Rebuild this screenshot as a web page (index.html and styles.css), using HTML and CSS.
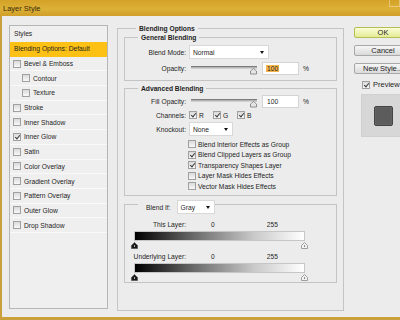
FILE: index.html
```html
<!DOCTYPE html>
<html lang="en">
<head>
    <meta charset="UTF-8">
    <title>Layer Style</title>
    <link rel="stylesheet" href="styles.css">
</head>
<body>
    <div class="window">
        <!-- title bar -->
        <div class="titlebar">
            <span class="title">Layer Style</span>
            <span class="close"></span>
        </div>

        <div class="body">
            <!-- styles list -->
            <div class="styles-panel">
                <div class="styles-head">Styles</div>
                <div class="style-row active">Blending Options: Default</div>
                <div class="style-row"><span class="cb"></span>Bevel &amp; Emboss</div>
                <div class="style-row sub"><span class="cb"></span>Contour</div>
                <div class="style-row sub"><span class="cb"></span>Texture</div>
                <div class="style-row"><span class="cb"></span>Stroke</div>
                <div class="style-row"><span class="cb"></span>Inner Shadow</div>
                <div class="style-row"><span class="cb on"></span>Inner Glow</div>
                <div class="style-row"><span class="cb"></span>Satin</div>
                <div class="style-row"><span class="cb"></span>Color Overlay</div>
                <div class="style-row"><span class="cb"></span>Gradient Overlay</div>
                <div class="style-row"><span class="cb"></span>Pattern Overlay</div>
                <div class="style-row"><span class="cb"></span>Outer Glow</div>
                <div class="style-row"><span class="cb"></span>Drop Shadow</div>
            </div>

            <!-- blending options -->
            <div class="options">
                <div class="group outer">
                    <div class="legend">Blending Options</div>

                    <div class="group general">
                        <div class="legend">General Blending</div>
                        <div class="field mode-row">
                            <span class="label">Blend Mode:</span>
                            <span class="select mode">Normal<i class="arrow"></i></span>
                        </div>
                        <div class="field slider-row">
                            <span class="label">Opacity:</span>
                            <svg class="slider" width="70" height="13" viewBox="0 0 70 13">
                                <rect x="2" y="4" width="66" height="1" fill="#7c7c7c"/>
                                <rect x="2" y="5" width="66" height="1.5" fill="#b4b4b4"/>
                                <path d="M64.5 6.5 L67.5 9 L67.5 12 L61.5 12 L61.5 9 Z" fill="#e6e6e6" stroke="#7a7a7a" stroke-width="0.8"/>
                            </svg>
                            <span class="num-input"><span class="selected">100</span></span>
                            <span class="pct">%</span>
                        </div>
                    </div>

                    <div class="group advanced">
                        <div class="legend">Advanced Blending</div>
                        <div class="field fill-row">
                            <span class="label">Fill Opacity:</span>
                            <svg class="slider" width="70" height="13" viewBox="0 0 70 13">
                                <rect x="2" y="4" width="66" height="1" fill="#7c7c7c"/>
                                <rect x="2" y="5" width="66" height="1.5" fill="#b4b4b4"/>
                                <path d="M64.5 6.5 L67.5 9 L67.5 12 L61.5 12 L61.5 9 Z" fill="#e6e6e6" stroke="#7a7a7a" stroke-width="0.8"/>
                            </svg>
                            <span class="num-input">100</span>
                            <span class="pct">%</span>
                        </div>
                        <div class="field channels-row">
                            <span class="label">Channels:</span>
                            <span class="channel"><span class="cb on"></span>R</span>
                            <span class="channel"><span class="cb on"></span>G</span>
                            <span class="channel"><span class="cb on"></span>B</span>
                        </div>
                        <div class="field knockout-row">
                            <span class="label">Knockout:</span>
                            <span class="select knockout">None<i class="arrow"></i></span>
                        </div>
                        <div class="checklist">
                            <div class="check-row"><span class="cb"></span>Blend Interior Effects as Group</div>
                            <div class="check-row"><span class="cb on"></span>Blend Clipped Layers as Group</div>
                            <div class="check-row"><span class="cb on"></span>Transparency Shapes Layer</div>
                            <div class="check-row"><span class="cb"></span>Layer Mask Hides Effects</div>
                            <div class="check-row"><span class="cb"></span>Vector Mask Hides Effects</div>
                        </div>
                    </div>

                    <div class="group blendif">
                        <div class="legend">
                            <span>Blend If:</span>
                            <span class="select gray">Gray<i class="arrow"></i></span>
                        </div>
                        <div class="field level-row">
                            <span class="label">This Layer:</span>
                            <span class="lo">0</span>
                            <span class="hi">255</span>
                        </div>
                        <div class="ramp"></div>
                        <div class="handles">
                            <svg width="7" height="7" viewBox="0 0 7 7"><path d="M3.5 0.5 L6.5 3.5 L6.5 6.5 L0.5 6.5 L0.5 3.5 Z" fill="#1a1a1a" stroke="#555" stroke-width="0.8"/><rect x="3" y="3" width="1" height="2" fill="#aaa"/></svg>
                            <svg width="7" height="7" viewBox="0 0 7 7"><path d="M3.5 0.5 L6.5 3.5 L6.5 6.5 L0.5 6.5 L0.5 3.5 Z" fill="#f2f2f2" stroke="#8a8a8a" stroke-width="0.8"/><rect x="3" y="3" width="1" height="2" fill="#888"/></svg>
                        </div>
                        <div class="field level-row">
                            <span class="label">Underlying Layer:</span>
                            <span class="lo">0</span>
                            <span class="hi">255</span>
                        </div>
                        <div class="ramp"></div>
                        <div class="handles">
                            <svg width="7" height="7" viewBox="0 0 7 7"><path d="M3.5 0.5 L6.5 3.5 L6.5 6.5 L0.5 6.5 L0.5 3.5 Z" fill="#1a1a1a" stroke="#555" stroke-width="0.8"/><rect x="3" y="3" width="1" height="2" fill="#aaa"/></svg>
                            <svg width="7" height="7" viewBox="0 0 7 7"><path d="M3.5 0.5 L6.5 3.5 L6.5 6.5 L0.5 6.5 L0.5 3.5 Z" fill="#f2f2f2" stroke="#8a8a8a" stroke-width="0.8"/><rect x="3" y="3" width="1" height="2" fill="#888"/></svg>
                        </div>
                    </div>
                </div>
            </div>

            <!-- buttons and preview -->
            <div class="actions">
                <div class="btn default">OK</div>
                <div class="btn">Cancel</div>
                <div class="btn">New Style...</div>
                <div class="preview-row"><span class="cb on"></span>Preview</div>
                <div class="swatch"><div class="chip"></div></div>
            </div>
        </div>
    </div>
</body>
</html>
```

FILE: styles.css
```css
/* base */
* {
    margin: 0;
    padding: 0;
    box-sizing: border-box;
}

body {
    width: 400px;
    height: 320px;
    overflow: hidden;
    font-family: "Liberation Sans", Arial, sans-serif;
    font-size: 6.7px;
    color: #1e1e1e;
}

/* window frame */
.window {
    width: 400px;
    height: 320px;
    display: flex;
    flex-direction: column;
    background: #c9a03c;
}

.titlebar {
    height: 16px;
    flex: none;
    display: flex;
    align-items: center;
    padding-left: 3px;
    background: linear-gradient(to bottom, #d3a227, #ddb136 55%, #cf9f2a);
    color: #3a2b0c;
    font-size: 7.5px;
}

.close {
    align-self: flex-start;
    margin-left: auto;
    width: 11px;
    height: 7px;
    border: 1px solid rgba(255, 255, 255, 0.35);
    border-top: none;
}

.body {
    flex: 1;
    margin: 0 0 3px 2px;
    padding: 9px 0 0 7px;
    background: #ececec;
    display: flex;
    align-items: flex-start;
    overflow: hidden;
}

/* checkbox */
.cb {
    position: relative;
    flex: none;
    width: 8px;
    height: 8px;
    margin-right: 3px;
    border: 1px solid #a0a0a0;
    background: linear-gradient(to bottom, #dadada, #f8f8f8);
}

.cb.on::after {
    content: "";
    position: absolute;
    left: 2px;
    top: 0;
    width: 2px;
    height: 4px;
    border: solid #3a3a3a;
    border-width: 0 1px 1px 0;
    transform: rotate(40deg);
}

/* styles list */
.styles-panel {
    flex: none;
    width: 99px;
    height: 284px;
    border: 1px solid #b6b6b6;
    background: #efefef;
}

.styles-head {
    height: 16px;
    line-height: 15px;
    padding-left: 4px;
}

.style-row {
    height: 14.7px;
    display: flex;
    align-items: center;
    padding-left: 3px;
    border-bottom: 1px solid #f9f9f9;
}

.style-row.sub {
    padding-left: 12px;
}

.style-row.active {
    padding-left: 4px;
    background: #fdc116;
    border-bottom-color: #fdc116;
}

/* groups */
.options {
    flex: none;
    margin: 3px 0 0 9px;
}

.group {
    border: 1px solid #c4c4c4;
}

.outer {
    width: 227px;
    height: 283px;
    padding: 0 6px;
}

.legend {
    width: fit-content;
    height: 9px;
    line-height: 9px;
    margin: -5px 0 0 12px;
    padding: 0 3px;
    background: #ececec;
    font-weight: bold;
}

.group .group .legend {
    margin-left: 13px;
}

.general {
    height: 44px;
    margin-top: 4px;
}

.advanced {
    height: 108px;
    margin-top: 7px;
}

.blendif {
    height: 79px;
    margin-top: 8px;
}

/* form rows */
.field {
    display: flex;
    align-items: center;
}

.label {
    flex: none;
    width: 61px;
    margin-right: 3px;
    text-align: right;
}

.select {
    display: flex;
    align-items: center;
    justify-content: space-between;
    height: 14px;
    padding: 0 4px 0 3px;
    background: #fff;
    border: 1px solid #d8d8d8;
}

.arrow {
    width: 0;
    height: 0;
    border-left: 2.5px solid transparent;
    border-right: 2.5px solid transparent;
    border-top: 3px solid #111;
}

.mode-row {
    height: 14px;
    margin-top: 3px;
}

.select.mode {
    width: 80px;
}

.slider-row {
    height: 13px;
    margin-top: 3px;
}

.num-input {
    display: flex;
    align-items: center;
    width: 37px;
    height: 13px;
    margin-left: 3px;
    padding-left: 4px;
    background: #fff;
    border: 1px solid #d4d4d4;
}

.selected {
    background: #f5b54c;
    padding: 0 1px;
    margin-left: -1px;
}

.pct {
    margin-left: 4px;
}

.fill-row {
    height: 13px;
    margin-top: 2px;
}

.channels-row {
    height: 12px;
    margin-top: 1px;
}

.channel {
    display: flex;
    align-items: center;
    width: 24px;
}

.channel .cb {
    margin-right: 2px;
}

.knockout-row {
    height: 14px;
    margin-top: 1px;
}

.select.knockout {
    width: 44px;
}

.checklist {
    margin-top: 3px;
    padding-left: 63px;
}

.check-row {
    height: 10.5px;
    display: flex;
    align-items: center;
}

.check-row .cb {
    margin-right: 2px;
}

/* blend if */
.blendif .legend {
    display: flex;
    align-items: center;
    height: 14px;
    margin-top: -5px;
    margin-left: 12px;
    padding: 0 0 0 8px;
    font-weight: normal;
}

.select.gray {
    width: 38px;
    margin-left: 6px;
}

.level-row {
    height: 10px;
    margin-top: 5px;
}

.level-row + .ramp + .handles + .level-row {
    margin-top: 2px;
}

.lo {
    margin-left: 22px;
}

.hi {
    margin-left: 52px;
}

.ramp {
    width: 171px;
    height: 10px;
    margin: 2px 0 0 9px;
    border: 1px solid #c6c6c6;
    background: linear-gradient(to right, #000, #6a6a6a 35%, #c8c8c8 70%, #fff);
}

.handles {
    display: flex;
    justify-content: space-between;
    width: 177px;
    height: 7px;
    margin: 1px 0 0 6px;
}

/* right column */
.actions {
    flex: none;
    width: 58px;
    margin: 2px 0 0 10px;
    font-size: 7.5px;
}

.btn {
    height: 11px;
    line-height: 9px;
    text-align: center;
    border: 1px solid #a8a8a8;
    border-radius: 2px;
    background: linear-gradient(to bottom, #f6f6f6, #dadada);
}

.btn + .btn {
    margin-top: 7px;
}

.btn.default {
    border-color: #b6bf55;
    background: linear-gradient(to bottom, #fbfdd6, #e3eb96);
}

.preview-row {
    display: flex;
    align-items: center;
    height: 9px;
    margin: 6px 0 0 8px;
}

.swatch {
    width: 51px;
    height: 43px;
    margin: 5px 0 0 7px;
    background: #d7d7d7;
    border: 1px solid #d0d0d0;
}

.chip {
    width: 19px;
    height: 20px;
    margin: 11px 0 0 12px;
    background: #5c5c5c;
    border: 1px solid #444;
    border-radius: 2px;
    box-shadow: inset 0 0 2px #7a7a7a;
}
```
